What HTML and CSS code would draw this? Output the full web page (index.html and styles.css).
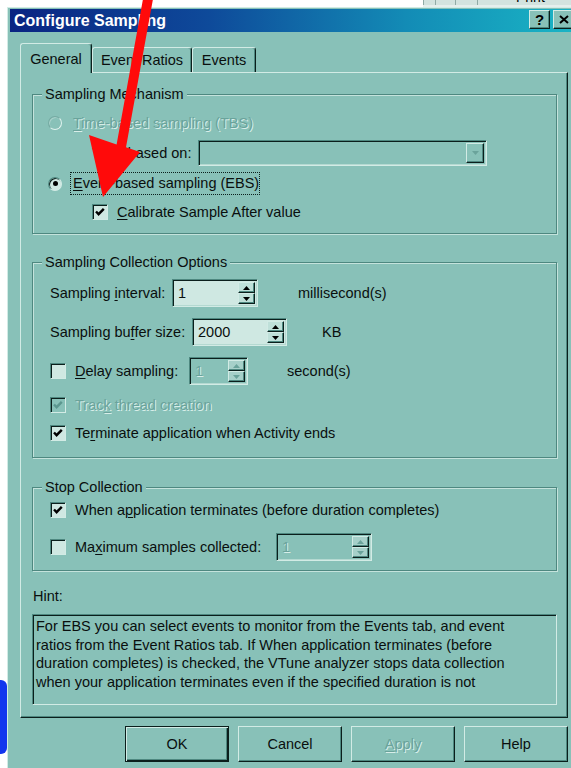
FILE: index.html
```html
<!DOCTYPE html>
<html lang="en">
<head>
<meta charset="utf-8">
<title>Configure Sampling</title>
<link rel="stylesheet" href="styles.css">
</head>
<body>
<div class="desk-top">
  <div class="desk-blank"></div>
  <div class="behind-strip">
    <span class="behind-cell w12"></span>
    <span class="behind-cell w20"></span>
    <span class="behind-cell w22"></span>
    <span class="behind-cell behind-print"><span class="behind-text">Print</span></span>
  </div>
</div>

<div class="desk-row">
  <div class="desk-gutter"><div class="desk-blob"></div></div>

  <div class="dialog">
    <div class="titlebar">
      <span class="title">Configure Sampling</span>
      <div class="cap-btns">
        <span class="cap-btn cap-help">?</span>
        <span class="cap-btn"><svg class="cap-x" viewBox="0 0 10 9" width="10" height="9"><path d="M1 1 L9 8 M9 1 L1 8"/></svg></span>
      </div>
    </div>

    <div class="dlg-body">
      <div class="tabs">
        <span class="tab tab-active tab-general">General</span>
        <span class="tab tab-ratios">Event Ratios</span>
        <span class="tab tab-events">Events</span>
      </div>

      <div class="panel">
        <!-- Sampling mechanism -->
        <div class="group group-mech">
          <div class="legend">Sampling Mechanism</div>
          <div class="row row-tbs">
            <span class="radio radio-dis"></span>
            <span class="lbl gap11 gray"><u>T</u>ime-based sampling (TBS)</span>
          </div>
          <div class="row row-combo">
            <span class="combo-lbl">Time based on:</span>
            <div class="combo">
              <span class="combo-btn"><svg viewBox="0 0 7 4" width="7" height="4"><path class="tri-dis" d="M0 0 H7 L3.5 4 Z"/></svg></span>
            </div>
          </div>
          <div class="row row-ebs">
            <span class="radio radio-on"></span>
            <span class="lbl focus"><u>E</u>vent-based sampling (EBS)</span>
          </div>
          <div class="row row-calib">
            <span class="check"><svg viewBox="0 0 14 14" width="14" height="14"><polyline class="tick" points="3,6.5 5.6,9.2 10.8,3.8"/></svg></span>
            <span class="lbl gap9"><u>C</u>alibrate Sample After value</span>
          </div>
        </div>

        <!-- Sampling collection options -->
        <div class="group group-opts">
          <div class="legend">Sampling Collection Options</div>
          <div class="row row-opt row-interval">
            <span class="fld-lbl lbl-interval">Sampling <u>i</u>nterval:</span>
            <div class="spin spin-interval">
              <span class="spin-val">1</span>
              <span class="spin-btns">
                <span class="spin-btn"><svg viewBox="0 0 7 4" width="7" height="4"><path d="M0 4 H7 L3.5 0 Z"/></svg></span>
                <span class="spin-btn"><svg viewBox="0 0 7 4" width="7" height="4"><path d="M0 0 H7 L3.5 4 Z"/></svg></span>
              </span>
            </div>
            <span class="unit unit-ms">millisecond(s)</span>
          </div>
          <div class="row row-opt row-buffer">
            <span class="fld-lbl lbl-buffer">Sampling bu<u>f</u>fer size:</span>
            <div class="spin spin-buffer">
              <span class="spin-val">2000</span>
              <span class="spin-btns">
                <span class="spin-btn"><svg viewBox="0 0 7 4" width="7" height="4"><path d="M0 4 H7 L3.5 0 Z"/></svg></span>
                <span class="spin-btn"><svg viewBox="0 0 7 4" width="7" height="4"><path d="M0 0 H7 L3.5 4 Z"/></svg></span>
              </span>
            </div>
            <span class="unit unit-kb">KB</span>
          </div>
          <div class="row row-opt row-delay">
            <span class="check"></span>
            <span class="lbl gap9 lbl-delay"><u>D</u>elay sampling:</span>
            <div class="spin spin-dis spin-delay">
              <span class="spin-val gray">1</span>
              <span class="spin-btns">
                <span class="spin-btn"><svg viewBox="0 0 7 4" width="7" height="4"><path class="tri-dis" d="M0 4 H7 L3.5 0 Z"/></svg></span>
                <span class="spin-btn"><svg viewBox="0 0 7 4" width="7" height="4"><path class="tri-dis" d="M0 0 H7 L3.5 4 Z"/></svg></span>
              </span>
            </div>
            <span class="unit unit-sec">second(s)</span>
          </div>
          <div class="row row-opt row-track">
            <span class="check check-dis"><svg viewBox="0 0 14 14" width="14" height="14"><polyline class="tick" points="3,6.5 5.6,9.2 10.8,3.8"/></svg></span>
            <span class="lbl gap9 gray">Trac<u>k</u> thread creation</span>
          </div>
          <div class="row row-opt row-term">
            <span class="check"><svg viewBox="0 0 14 14" width="14" height="14"><polyline class="tick" points="3,6.5 5.6,9.2 10.8,3.8"/></svg></span>
            <span class="lbl gap9">Te<u>r</u>minate application when Activity ends</span>
          </div>
        </div>

        <!-- Stop collection -->
        <div class="group group-stop">
          <div class="legend">Stop Collection</div>
          <div class="row row-opt row-when">
            <span class="check"><svg viewBox="0 0 14 14" width="14" height="14"><polyline class="tick" points="3,6.5 5.6,9.2 10.8,3.8"/></svg></span>
            <span class="lbl gap9">When a<u>p</u>plication terminates (before duration completes)</span>
          </div>
          <div class="row row-opt row-max">
            <span class="check"></span>
            <span class="lbl gap9 lbl-max">Ma<u>x</u>imum samples collected:</span>
            <div class="spin spin-dis spin-max">
              <span class="spin-val gray">1</span>
              <span class="spin-btns">
                <span class="spin-btn"><svg viewBox="0 0 7 4" width="7" height="4"><path class="tri-dis" d="M0 4 H7 L3.5 0 Z"/></svg></span>
                <span class="spin-btn"><svg viewBox="0 0 7 4" width="7" height="4"><path class="tri-dis" d="M0 0 H7 L3.5 4 Z"/></svg></span>
              </span>
            </div>
          </div>
        </div>

        <div class="hint-lbl">Hint:</div>
        <div class="hint">For EBS you can select events to monitor from the Events tab, and event<br>ratios from the Event Ratios tab. If When application terminates (before<br>duration completes) is checked, the VTune analyzer stops data collection<br>when your application terminates even if the specified duration is not</div>
      </div>

      <div class="buttons">
        <span class="btn btn-default">OK</span>
        <span class="btn">Cancel</span>
        <span class="btn gray"><u>A</u>pply</span>
        <span class="btn">Help</span>
      </div>
    </div>
  </div>
</div>

<svg class="callout" viewBox="0 0 571 768" width="571" height="768">
  <polygon points="143,-1 153,-1 126,147.3 140,152 103,197 89,135 116.6,144.5"/>
</svg>
</body>
</html>
```

FILE: styles.css
```css
* { box-sizing: border-box; }

html, body { margin: 0; padding: 0; }

body {
  position: relative;
  width: 571px;
  height: 768px;
  overflow: hidden;
  background: #fff;
  font-family: "Liberation Sans", Arial, sans-serif;
  font-size: 14.5px;
  color: #0a0f0e;
}

u {
  text-decoration-thickness: 1px;
  text-underline-offset: 2px;
}

/* ---------- desktop behind the dialog ---------- */
.desk-top { display: flex; height: 7px; }
.desk-blank { width: 423px; background: #fff; }
.behind-strip {
  flex: 1;
  display: flex;
  overflow: hidden;
  background: #d3e3df;
  border-bottom: 2px solid #e6efed;
}
.behind-cell { height: 100%; border-left: 1px solid #90aaa5; }
.w12 { width: 12px; }
.w20 { width: 20px; }
.w22 { width: 22px; }
.behind-print { flex: 1; padding-left: 38px; overflow: hidden; }
.behind-text {
  display: block;
  font-size: 14px;
  line-height: 14px;
  margin-top: -10px;
  color: #000;
}

.desk-row { display: flex; height: 761px; }
.desk-gutter { width: 7px; flex: none; padding-top: 673px; background: #fff; }
.desk-blob {
  height: 74px;
  background: #1236ee;
  border-radius: 0 6px 6px 0;
}

/* ---------- dialog frame ---------- */
.dialog {
  width: 573px;
  flex: none;
  background: #88c1b8;
  border-top: 1px solid #d2ebe5;
  border-left: 1px solid #d2ebe5;
  padding: 1px 2px 0 2px;
}

.titlebar {
  display: flex;
  align-items: flex-start;
  height: 23px;
  padding-left: 4px;
  background: linear-gradient(90deg, #0a2482 0%, #0e4a9a 35%, #138cb6 70%, #1ab5c5 100%);
}
.title {
  flex: 1;
  color: #fff;
  font-weight: bold;
  font-size: 16px;
  line-height: 23px;
  white-space: nowrap;
}
.cap-btns { display: flex; gap: 3px; margin-top: 1px; margin-right: 4px; }
.cap-btn {
  width: 21px;
  height: 19px;
  display: flex;
  align-items: center;
  justify-content: center;
  background: #88c1b8;
  border: 1px solid;
  border-color: #d2ebe5 #0b1f1c #0b1f1c #d2ebe5;
  box-shadow: inset -1px -1px 0 #4e8880;
  font-weight: bold;
  font-size: 15px;
  color: #000;
}
.cap-x path { stroke: #000; stroke-width: 2; fill: none; }

.dlg-body { padding: 11px 10px 0 10px; }

/* ---------- tabs ---------- */
.tabs {
  position: relative;
  z-index: 1;
  display: flex;
  align-items: flex-end;
  height: 30px;
  margin-bottom: -1px;
}
.tab {
  display: flex;
  align-items: center;
  justify-content: center;
  height: 25px;
  margin-bottom: 1px;
  background: #88c1b8;
  border-top: 1px solid #d2ebe5;
  border-left: 1px solid #d2ebe5;
  border-right: 1px solid #0b1f1c;
  border-radius: 3px 3px 0 0;
  box-shadow: inset -1px 0 0 #4e8880;
  white-space: nowrap;
}
.tab-active { height: 30px; margin-bottom: 0; }
.tab-general { width: 72px; }
.tab-ratios { width: 100px; }
.tab-events { width: 64px; }

.panel {
  background: #88c1b8;
  border: 1px solid;
  border-color: #d2ebe5 #0b1f1c #0b1f1c #d2ebe5;
  box-shadow: inset -1px -1px 0 #4e8880;
  padding: 0 10px 12px 11px;
}

/* ---------- group boxes ---------- */
.group {
  border: 1px solid #4e8880;
  box-shadow: inset 1px 1px 0 #c4e3dc, 1px 1px 0 #c4e3dc;
}
.legend {
  width: fit-content;
  margin: -9px 0 0 9px;
  padding: 0 3px;
  line-height: 17px;
  background: #88c1b8;
}
.group-mech { margin-top: 21px; padding-bottom: 12px; }
.group-opts { margin-top: 28px; padding-bottom: 15px; }
.group-stop { margin-top: 29px; padding-bottom: 9px; }

.row { display: flex; align-items: center; white-space: nowrap; }
.lbl { line-height: 17px; }
.gap11 { margin-left: 11px; }
.gap9 { margin-left: 9px; }

.gray { color: #6aa39b; text-shadow: 1px 1px 0 #d8eee9; }

.row-tbs { margin-top: 10px; height: 20px; padding-left: 15px; }
.row-combo { margin-top: 7px; height: 26px; padding-left: 59px; }
.row-ebs { margin-top: 6px; height: 23px; padding-left: 15px; }
.row-calib { margin-top: 8px; height: 18px; padding-left: 59px; }

.combo-lbl { width: 98px; text-align: right; line-height: 17px; }
.combo {
  width: 289px;
  height: 26px;
  margin-left: 8px;
  display: flex;
  justify-content: flex-end;
  padding: 2px;
  border: 1px solid;
  border-color: #4e8880 #d2ebe5 #d2ebe5 #4e8880;
  box-shadow: inset 1px 1px 0 #0b1f1c, inset -1px -1px 0 #b4d9d1;
  background: #88c1b8;
}
.combo-btn {
  width: 18px;
  display: flex;
  align-items: center;
  justify-content: center;
  border: 1px solid;
  border-color: #d2ebe5 #0b1f1c #0b1f1c #d2ebe5;
  box-shadow: inset -1px -1px 0 #4e8880;
  background: #88c1b8;
}

.focus {
  margin-left: 8px;
  width: 190px;
  line-height: 21px;
  padding: 0 2px;
  border: 1px dotted #0b1f1c;
}

/* radio buttons */
.radio {
  flex: none;
  width: 14px;
  height: 14px;
  border-radius: 50%;
  display: flex;
  align-items: center;
  justify-content: center;
  border: 1px solid;
  border-color: #4e8880 #d2ebe5 #d2ebe5 #4e8880;
  box-shadow: inset 1px 1px 0 #0b1f1c;
  background: #cfe8e2;
}
.radio-on::after {
  content: "";
  width: 5px;
  height: 5px;
  border-radius: 50%;
  background: #000;
}
.radio-dis {
  background: #88c1b8;
  border-color: #75aaa2 #e0f2ee #e0f2ee #75aaa2;
  box-shadow: inset 1px 1px 0 #a9d2cb;
}

/* check boxes */
.check {
  flex: none;
  width: 16px;
  height: 16px;
  display: flex;
  align-items: center;
  justify-content: center;
  border: 1px solid;
  border-color: #4e8880 #d2ebe5 #d2ebe5 #4e8880;
  box-shadow: inset 1px 1px 0 #0b1f1c;
  background: #cfe8e2;
}
.tick { fill: none; stroke: #000; stroke-width: 2.4; }
.check-dis { background: #88c1b8; }
.check-dis .tick { stroke: #5c978f; }

/* option rows */
.row-opt { padding-left: 17px; }
.row-interval { margin-top: 8px; height: 28px; }
.row-buffer { margin-top: 11px; height: 28px; }
.row-delay { margin-top: 11px; height: 28px; }
.row-track { margin-top: 11px; height: 18px; }
.row-term { margin-top: 10px; height: 18px; }
.row-when { margin-top: 5px; height: 18px; }
.row-max { margin-top: 14px; height: 28px; }

.fld-lbl { line-height: 17px; }
.lbl-interval { width: 122px; }
.lbl-buffer { width: 142px; }
.lbl-delay { width: 114px; }
.lbl-max { width: 201px; }

.unit { line-height: 17px; }
.unit-ms { margin-left: 40px; }
.unit-kb { margin-left: 35px; }
.unit-sec { margin-left: 39px; }

/* spin edits */
.spin {
  display: flex;
  height: 28px;
  padding: 2px;
  border: 1px solid;
  border-color: #4e8880 #d2ebe5 #d2ebe5 #4e8880;
  box-shadow: inset 1px 1px 0 #0b1f1c, inset -1px -1px 0 #b4d9d1;
  background: #cfe8e2;
}
.spin-interval { width: 86px; }
.spin-buffer { width: 95px; }
.spin-delay { width: 59px; }
.spin-max { width: 96px; }
.spin-dis { background: #88c1b8; }
.spin-val { flex: 1; padding-left: 3px; line-height: 22px; }
.spin-btns { width: 17px; display: flex; flex-direction: column; }
.spin-btn {
  flex: 1;
  display: flex;
  align-items: center;
  justify-content: center;
  border: 1px solid;
  border-color: #d2ebe5 #0b1f1c #0b1f1c #d2ebe5;
  box-shadow: inset -1px -1px 0 #4e8880;
  background: #bfe0d9;
}
.spin-dis .spin-btn { background: #a6d0c9; }
.spin-btn path { fill: #000; }
.spin-btn path.tri-dis, .tri-dis { fill: #6aa39b; }

/* hint */
.hint-lbl { margin-top: 17px; padding-left: 1px; line-height: 17px; }
.hint {
  margin-top: 9px;
  height: 91px;
  overflow: hidden;
  padding: 2px 4px 0 3px;
  line-height: 18.7px;
  white-space: nowrap;
  border: 1px solid;
  border-color: #4e8880 #d2ebe5 #d2ebe5 #4e8880;
  box-shadow: inset 1px 1px 0 #0b1f1c;
  background: #88c1b8;
}

/* ---------- dialog buttons ---------- */
.buttons {
  display: flex;
  justify-content: flex-end;
  gap: 9px;
  margin-top: 8px;
}
.btn {
  width: 104px;
  height: 36px;
  display: flex;
  align-items: center;
  justify-content: center;
  background: #88c1b8;
  border: 1px solid;
  border-color: #d2ebe5 #0b1f1c #0b1f1c #d2ebe5;
  box-shadow: inset -1px -1px 0 #4e8880;
}
.btn-default {
  border-color: #0b1f1c;
  box-shadow: inset 1px 1px 0 #d2ebe5, inset -1px -1px 0 #0b1f1c, inset -2px -2px 0 #4e8880;
}

/* ---------- red call-out arrow drawn over the dialog ---------- */
.callout {
  position: absolute;
  top: 0;
  left: 0;
  z-index: 10;
  pointer-events: none;
}
.callout polygon { fill: #ff0a0a; }
```
